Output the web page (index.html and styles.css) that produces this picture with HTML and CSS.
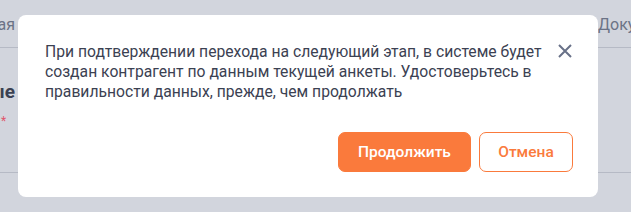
FILE: index.html
```html
<!DOCTYPE html>
<html lang="ru">
<head>
<meta charset="utf-8">
<link rel="stylesheet" href="styles.css">
</head>
<body>
<div class="page">
  <div class="tabs">
    <div class="tab-left"><span>Основная</span></div>
    <div class="tab-gap"></div>
    <div class="tab-right"><span>Документы</span></div>
  </div>
  <div class="section">
    <div class="clip-left"><span class="heading">Данные</span></div>
    <div class="clip-left star-row"><span class="star">*</span></div>
  </div>
  <div class="bottom"></div>
</div>

<div class="modal" role="dialog">
  <div class="modal-body">
    <p class="message">При подтверждении перехода на следующий этап, в системе будет создан контрагент по данным текущей анкеты. Удостоверьтесь в правильности данных, прежде, чем продолжать</p>
    <button class="close" aria-label="Закрыть">
      <svg width="14" height="14" viewBox="0 0 14 14"><path d="M1 1L13 13M13 1L1 13" stroke="#687188" stroke-width="2" stroke-linecap="butt"/></svg>
    </button>
  </div>
  <div class="actions">
    <button class="btn btn-primary">Продолжить</button>
    <button class="btn btn-outline">Отмена</button>
  </div>
</div>
</body>
</html>
```
FILE: styles.css
```css
* { box-sizing: border-box; }
html, body { margin: 0; padding: 0; }
body {
  width: 631px;
  height: 212px;
  overflow: hidden;
  background: #d2d5dd;
  font-family: Roboto, "Noto Sans", sans-serif;
  position: relative;
}
.page {
  display: flex;
  flex-direction: column;
  width: 631px;
  height: 212px;
  overflow: hidden;
}
.tabs {
  display: flex;
  height: 48px;
  border-bottom: 1px solid #b6bac5;
  align-items: flex-start;
  padding-top: 15px;
  color: #6b7386;
  font-size: 16px;
  line-height: 20px;
}
.tab-left {
  width: 15px;
  flex-shrink: 0;
  overflow: hidden;
  display: flex;
  justify-content: flex-end;
  white-space: nowrap;
}
.tab-gap { width: 583px; flex-shrink: 0; }
.tab-right {
  width: 33px;
  flex-shrink: 0;
  overflow: hidden;
  white-space: nowrap;
}
.section {
  height: 125px;
  border-bottom: 1px solid #b6bac5;
  padding-top: 32px;
}
.clip-left {
  width: 15px;
  overflow: hidden;
  display: flex;
  justify-content: flex-end;
  white-space: nowrap;
}
.heading {
  font-size: 19px;
  font-weight: 700;
  color: #3b4152;
  line-height: 24px;
}
.star-row {
  margin-top: 10px;
  justify-content: flex-start;
  padding-left: 1px;
}
.star {
  color: #e0566b;
  font-size: 12px;
  line-height: 14px;
}
.modal {
  position: absolute;
  left: 18px;
  top: 15px;
  width: 580px;
  height: 182px;
  background: #ffffff;
  border-radius: 8px;
  padding: 27px 25px 25px 27px;
  display: flex;
  flex-direction: column;
}
.modal-body {
  display: flex;
  align-items: flex-start;
  gap: 12px;
}
.message {
  margin: 0;
  flex: 1;
  font-size: 15.7px;
  line-height: 20px;
  color: #3b4152;
}
.close {
  border: 0;
  background: none;
  padding: 0;
  margin: 2px 1px 0 0;
  width: 14px;
  height: 14px;
  flex-shrink: 0;
  display: flex;
  cursor: pointer;
}
.actions {
  margin-top: auto;
  display: flex;
  justify-content: flex-end;
  gap: 8px;
}
.btn {
  height: 40px;
  border-radius: 7px;
  font-family: Roboto, Inter, sans-serif;
  font-size: 15.5px;
  font-weight: 500;
  padding: 0;
  cursor: pointer;
}
.btn-primary {
  width: 133px;
  background: #fa7a3c;
  border: 1px solid #fa7a3c;
  color: #ffffff;
}
.btn-outline {
  width: 94px;
  background: #ffffff;
  border: 1px solid #fa7a3c;
  color: #fa7a3c;
}
```
